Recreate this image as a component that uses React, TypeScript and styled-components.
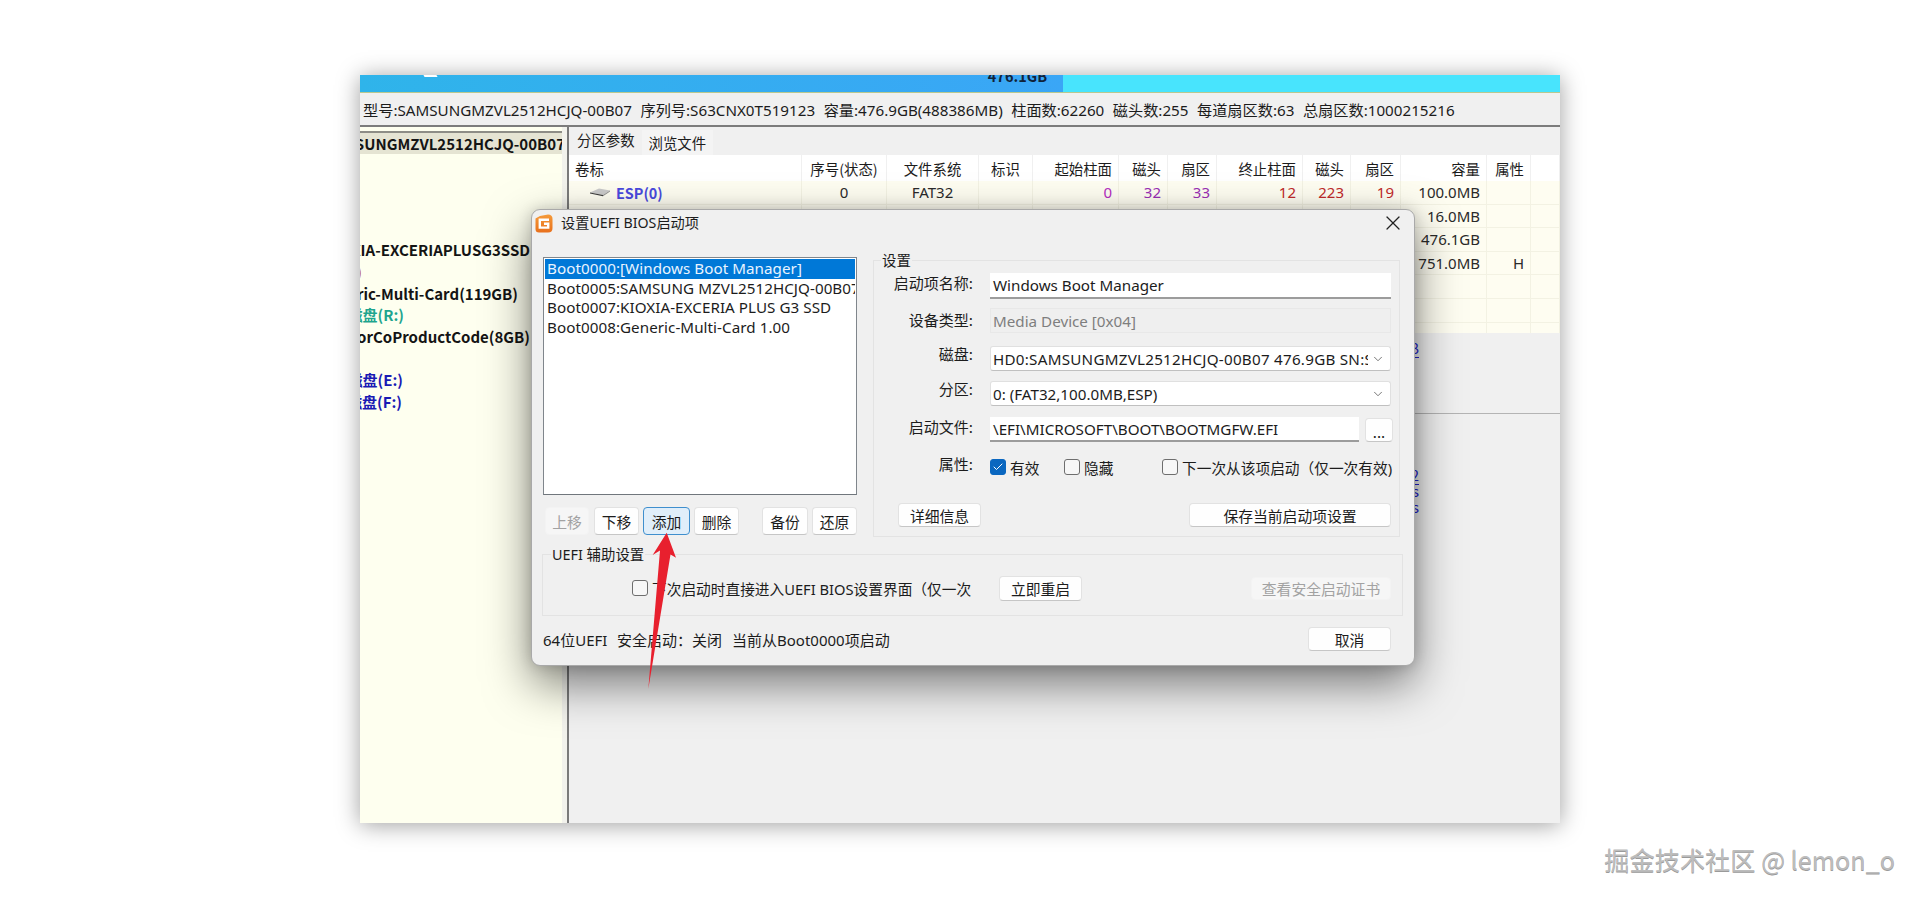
import React from 'react';
import styled, { createGlobalStyle } from 'styled-components';
import { Check, ChevronDown, X } from 'lucide-react';

const UI_FONT = `"Noto Sans", "Noto Sans CJK SC", sans-serif`;
const CJK_FONT = `"Noto Sans CJK SC", "Noto Sans", sans-serif`;

const GlobalStyle = createGlobalStyle`
  html, body {
    margin: 0;
    padding: 0;
    background: #fff;
  }
  * {
    box-sizing: border-box;
  }
`;

const Page = styled.div`
  position: relative;
  width: 1920px;
  height: 898px;
  overflow: hidden;
  padding: 75px 0 0 360px;
  background: #fff;
  font-family: ${CJK_FONT};
  color: #1c1c1c;
`;

const AppWindow = styled.div`
  position: relative;
  width: 1200px;
  height: 748px;
  display: flex;
  flex-direction: column;
  background: #f0f0f0;
  box-shadow: 0 2px 22px rgba(0, 0, 0, 0.38);
`;

const DiskBand = styled.div`
  height: 18px;
  flex: none;
  display: flex;
  border-bottom: 1px solid #b9c88f;
`;

const PartitionBar = styled.div`
  width: 703px;
  position: relative;
  overflow: hidden;
  display: flex;
  justify-content: flex-end;
  align-items: flex-end;
  padding: 0 16px 9px 0;
  background: linear-gradient(to right, #2fb4ea, #3aa6f6);
`;

const BarLabel = styled.span`
  font-size: 14.5px;
  font-weight: 700;
  line-height: 14px;
  color: #10233a;
`;

const BarGlint = styled.span`
  position: absolute;
  left: 64px;
  top: 0;
  width: 13px;
  height: 2px;
  background: #fff;
  transform: skewX(30deg);
`;

const FreeBar = styled.div`
  flex: 1;
  background: #48e4fd;
`;

const InfoBar = styled.div`
  height: 34px;
  flex: none;
  display: flex;
  align-items: center;
  gap: 8.5px;
  padding: 0 0 0 3px;
  border-bottom: 2px solid #7c7c7c;
  font-family: ${UI_FONT};
  font-size: 15.2px;
  white-space: nowrap;
`;

const Split = styled.div`
  flex: 1;
  min-height: 0;
  display: flex;
`;

const TreePane = styled.div`
  width: 202px;
  flex: none;
  overflow: hidden;
  padding-top: 4px;
  background: #feffef;
`;

const TreeRow = styled.div<{ $end: number; $color?: string; $height?: number }>`
  width: ${({ $end }) => $end}px;
  height: ${({ $height }) => $height ?? 21.7}px;
  display: flex;
  align-items: center;
  justify-content: flex-end;
  white-space: nowrap;
  font-size: 15px;
  font-weight: 700;
  color: ${({ $color }) => $color ?? '#141414'};
`;

const TreeSelection = styled.div`
  height: 23px;
  margin-bottom: 85px;
  background: #e5e4d3;
  border-top: 2px solid #8d8d86;
`;

const Splitter = styled.div`
  width: 7px;
  flex: none;
  background: #f2f2ec;
  border-right: 2px solid #7a7a7a;
`;

const DetailPane = styled.div`
  flex: 1;
  min-width: 0;
  display: flex;
  flex-direction: column;
`;

const TabStrip = styled.div`
  height: 28px;
  flex: none;
  display: flex;
  align-items: flex-end;
  padding-left: 1px;
`;

const Tab = styled.div<{ $active?: boolean }>`
  height: ${({ $active }) => ($active ? 26 : 25)}px;
  display: flex;
  align-items: ${({ $active }) => ($active ? 'flex-start' : 'center')};
  padding: 0 7px;
  font-size: 14.4px;
  line-height: 22px;
  background: ${({ $active }) => ($active ? '#f0f0f0' : '#f4f4f4')};
`;

const PartitionGrid = styled.div`
  height: 178px;
  flex: none;
  overflow: hidden;
  display: grid;
  grid-template-columns: 233px 85px 92px 54px 86px 49px 49px 86px 48px 50px 86px 44px 1fr;
  grid-template-rows: 26px;
  grid-auto-rows: 23.6px;
  align-content: start;
  background: #fefdf1;
`;

const HeadCell = styled.div<{ $align: string }>`
  display: flex;
  align-items: center;
  justify-content: ${({ $align }) => $align};
  padding: 0 6px;
  background: #fff;
  border-right: 1px solid #f0f0f0;
  font-size: 14.4px;
  white-space: nowrap;
`;

const Cell = styled.div<{ $align: string; $color?: string }>`
  display: flex;
  align-items: center;
  justify-content: ${({ $align }) => $align};
  padding: 0 6px;
  border-right: 1px solid #f3f2e3;
  border-bottom: 1px solid #f3f2e3;
  font-family: ${UI_FONT};
  font-size: 15px;
  white-space: nowrap;
  color: ${({ $color }) => $color ?? '#2a2a2a'};
`;

const VolumeCell = styled(Cell)`
  padding-left: 21px;
  gap: 6px;
  font-family: ${CJK_FONT};
  font-size: 14.4px;
  font-weight: 700;
`;

const LowerSection = styled.div<{ $height?: number }>`
  flex: ${({ $height }) => ($height ? 'none' : 1)};
  height: ${({ $height }) => ($height ? `${$height}px` : 'auto')};
  padding-top: 7px;
  display: flex;
  flex-direction: column;
  align-items: flex-end;
  width: 850px;
  font-size: 14.4px;
  line-height: 16px;
  color: #2121cf;
`;

const Rule = styled.div`
  height: 1px;
  flex: none;
  background: #b4b4b4;
`;

const DetailLink = styled.span<{ $plain?: boolean; $top?: number }>`
  margin-top: ${({ $top }) => $top ?? 0}px;
  text-decoration: ${({ $plain }) => ($plain ? 'none' : 'underline')};
  text-underline-offset: 3px;
`;

const Dialog = styled.div`
  position: absolute;
  left: 171px;
  top: 134px;
  width: 884px;
  height: 457px;
  display: flex;
  flex-direction: column;
  padding: 0 14px 0 11px;
  background: #f0f0f0;
  border: 1px solid #a9a9a9;
  border-radius: 9px;
  box-shadow: 0 18px 46px rgba(0, 0, 0, 0.5), 0 0 14px rgba(0, 0, 0, 0.16);
  font-family: ${UI_FONT};
  font-size: 15.2px;
`;

const TitleBar = styled.div`
  height: 30px;
  flex: none;
  display: flex;
  align-items: center;
  margin-left: -8px;
  gap: 8px;
  padding-bottom: 4px;
`;

const TitleText = styled.span`
  font-size: 14.2px;
  margin-bottom: 3px;
`;

const CloseButton = styled.div`
  margin-left: auto;
  margin-right: -5px;
  width: 24px;
  height: 24px;
  color: #222;
`;

const MainRow = styled.div`
  height: 297px;
  flex: none;
  padding-top: 17px;
  display: flex;
  gap: 16px;
`;

const ListColumn = styled.div`
  width: 314px;
  flex: none;
  display: flex;
  flex-direction: column;
  gap: 12px;
`;

const ListBox = styled.div`
  height: 238px;
  flex: none;
  overflow: hidden;
  padding: 1px;
  background: #fff;
  border: 1px solid #80868c;
  border-bottom-color: #70767c;
`;

const ListItem = styled.div<{ $selected?: boolean }>`
  height: 19.6px;
  display: flex;
  align-items: center;
  padding: 0 0 1px 2px;
  white-space: nowrap;
  overflow: hidden;
  letter-spacing: 0.05px;
  background: ${({ $selected }) => ($selected ? '#0078d7' : 'transparent')};
  color: ${({ $selected }) => ($selected ? '#e9f4ff' : '#1c1c1c')};
`;

const ListButtons = styled.div`
  display: flex;
  padding-left: 2px;
`;

const PushButton = styled.div<{
  $width: number;
  $height?: number;
  $mode?: 'focus' | 'disabled';
  $left?: number | 'auto';
  $mr?: number;
}>`
  width: ${({ $width }) => $width}px;
  height: ${({ $height }) => $height ?? 28}px;
  flex: none;
  display: flex;
  align-items: center;
  justify-content: center;
  margin-left: ${({ $left }) => ($left === 'auto' ? 'auto' : `${$left ?? 0}px`)};
  margin-right: ${({ $mr }) => $mr ?? 0}px;
  border-radius: 4px;
  white-space: nowrap;
  font-family: ${CJK_FONT};
  font-size: 14.8px;
  background: ${({ $mode }) =>
    $mode === 'focus' ? '#e0eefa' : $mode === 'disabled' ? '#f6f6f6' : '#fefefe'};
  color: ${({ $mode }) => ($mode === 'disabled' ? '#a2a2a2' : '#1c1c1c')};
  border: ${({ $mode }) =>
    $mode === 'focus'
      ? '1.5px solid #3f8fce'
      : $mode === 'disabled'
        ? '1px solid #f3f3f3'
        : '1px solid #e2e2e2'};
  border-bottom-color: ${({ $mode }) =>
    $mode === 'focus' ? '#3f8fce' : $mode === 'disabled' ? '#f3f3f3' : '#c6c6c6'};
`;

const GroupBox = styled.div`
  position: relative;
  border: 1px solid #e3e3e3;
`;

const GroupLegend = styled.span<{ $left: number }>`
  position: absolute;
  left: ${({ $left }) => $left}px;
  top: -10px;
  padding: 0 1px;
  font-size: 14.4px;
  line-height: 20px;
  background: #f0f0f0;
  white-space: nowrap;
`;

const SettingsBox = styled(GroupBox)`
  width: 527px;
  height: 277px;
  margin-top: 3px;
  padding: 12px 8px 0 0;
  display: flex;
  flex-direction: column;
`;

const FormRow = styled.div<{ $top?: number; $height: number }>`
  height: ${({ $height }) => $height}px;
  margin-top: ${({ $top }) => $top ?? 0}px;
  flex: none;
  display: flex;
  align-items: center;
`;

const FieldLabel = styled.div<{ $lift: number }>`
  width: 99px;
  flex: none;
  margin-right: 17px;
  padding-bottom: ${({ $lift }) => $lift}px;
  text-align: right;
  font-family: ${CJK_FONT};
  font-size: 15px;
  white-space: nowrap;
`;

const TextField = styled.div<{ $readOnly?: boolean; $select?: boolean }>`
  flex: 1;
  min-width: 0;
  height: 100%;
  display: flex;
  align-items: center;
  padding: 0 3px 0 ${({ $readOnly, $select }) => ($readOnly || $select ? 2 : 3)}px;
  white-space: nowrap;
  overflow: hidden;
  background: ${({ $readOnly }) => ($readOnly ? '#efefef' : '#fff')};
  color: ${({ $readOnly }) => ($readOnly ? '#7e7e7e' : '#1c1c1c')};
  border: ${({ $readOnly, $select }) =>
    $readOnly ? '1px solid #e8e8e8' : $select ? '1px solid #e0e0e0' : 'none'};
  border-bottom: ${({ $readOnly, $select }) =>
    $readOnly ? '1px solid #e8e8e8' : $select ? '1px solid #c0c0c0' : '2px solid #9c9c9c'};
  border-radius: ${({ $select }) => ($select ? 3 : 0)}px;
`;

const SelectText = styled.span<{ $spacing?: number }>`
  flex: 1;
  min-width: 0;
  overflow: hidden;
  letter-spacing: ${({ $spacing }) => $spacing ?? 0}px;
`;

const SelectChevron = styled.span`
  width: 19px;
  flex: none;
  display: flex;
  justify-content: center;
  color: #5a5a5a;
`;

const BrowseButton = styled(PushButton)`
  margin-left: 6px;
  margin-right: -2px;
  padding-top: 3px;
`;

const CheckItem = styled.div<{ $width?: number }>`
  width: ${({ $width }) => ($width ? `${$width}px` : 'auto')};
  flex: none;
  display: flex;
  align-items: center;
  gap: 4px;
  white-space: nowrap;
  font-size: 14.7px;
`;

const CheckMark = styled.span<{ $on?: boolean }>`
  width: 16px;
  height: 16px;
  flex: none;
  display: flex;
  align-items: center;
  justify-content: center;
  border-radius: 3px;
  color: #fff;
  background: ${({ $on }) => ($on ? '#0a67c0' : '#f7f7f7')};
  border: 1px solid ${({ $on }) => ($on ? '#0a67c0' : '#6e6e6e')};
`;

const AuxBox = styled(GroupBox)`
  width: 861px;
  height: 62px;
  margin: 17px 0 0 -1px;
  flex: none;
  display: flex;
  align-items: center;
  padding: 6px 11px 0 89px;
`;

const StatusBar = styled.div`
  flex: 1;
  display: flex;
  align-items: center;
  padding-right: 9px;
  padding-bottom: 3px;
  font-size: 15px;
  white-space: nowrap;
`;

const StatusText = styled.span<{ $width: number }>`
  width: ${({ $width }) => $width}px;
  flex: none;
`;

const ArrowOverlay = styled.svg`
  position: absolute;
  left: 640px;
  top: 530px;
  width: 40px;
  height: 162px;
`;

const Watermark = styled.div`
  position: absolute;
  right: 25px;
  top: 842px;
  font-size: 25.2px;
  line-height: 34px;
  white-space: nowrap;
  color: #bdbdbd;
  text-shadow: 0 1px 0 #9a9a9a;
`;

const columns = [
  { title: '卷标', align: 'flex-start' },
  { title: '序号(状态)', align: 'center' },
  { title: '文件系统', align: 'center' },
  { title: '标识', align: 'center' },
  { title: '起始柱面', align: 'flex-end' },
  { title: '磁头', align: 'flex-end' },
  { title: '扇区', align: 'flex-end' },
  { title: '终止柱面', align: 'flex-end' },
  { title: '磁头', align: 'flex-end' },
  { title: '扇区', align: 'flex-end' },
  { title: '容量', align: 'flex-end' },
  { title: '属性', align: 'flex-end' },
  { title: '', align: 'flex-start' },
];

const MAGENTA = '#b42cc0';
const PURPLE = '#9a2fb4';
const RED = '#c02a2a';
const cellColors = [undefined, undefined, undefined, undefined, MAGENTA, PURPLE, PURPLE, RED, RED, RED];

const partitions = [
  ['ESP(0)', '0', 'FAT32', '', '0', '32', '33', '12', '223', '19', '100.0MB', '', ''],
  ['MSR(1)', '1', 'MSR', '', '12', '223', '20', '14', '138', '58', '16.0MB', '', ''],
  ['本地磁盘(C:)', '2', 'NTFS', '', '14', '138', '59', '62162', '47', '18', '476.1GB', '', ''],
  ['恢复(3)', '3', 'NTFS', '', '62162', '47', '19', '62260', '0', '0', '751.0MB', 'H', ''],
  ['', '', '', '', '', '', '', '', '', '', '', '', ''],
  ['', '', '', '', '', '', '', '', '', '', '', '', ''],
  ['', '', '', '', '', '', '', '', '', '', '', '', ''],
];

const bootEntries = [
  'Boot0000:[Windows Boot Manager]',
  'Boot0005:SAMSUNG MZVL2512HCJQ-00B07',
  'Boot0007:KIOXIA-EXCERIA PLUS G3 SSD',
  'Boot0008:Generic-Multi-Card 1.00',
];

function DriveIcon() {
  return (
    <svg width="20" height="10" viewBox="0 0 20 10" style={{ flex: 'none' }}>
      <path d="M0 5.5 L9 1.5 L20 3.5 L13 8 Z" fill="#c9c9c9" />
      <path d="M0 5.5 L13 8 L13 9.2 L0 6.6 Z" fill="#3c3c3c" />
      <path d="M13 8 L20 3.5 L20 4.6 L13 9.2 Z" fill="#8e8e8e" />
    </svg>
  );
}

function AppLogo() {
  return (
    <svg width="18" height="19" viewBox="0 0 18 19" style={{ flex: 'none' }}>
      <defs>
        <linearGradient id="logoFill" x1="0" y1="0" x2="0" y2="1">
          <stop offset="0" stopColor="#f59a3a" />
          <stop offset="1" stopColor="#e8701c" />
        </linearGradient>
      </defs>
      <path d="M5 2 L13 0.5 Q17.5 0.5 17.5 5 L17.5 14 Q17.5 18.5 13 18.5 L4 18.5 Q0.5 18.5 0.5 15 L0.5 4.5 Z" fill="url(#logoFill)" />
      <path d="M14 5.8 L4.8 5.8 L4.8 13.6 L13.2 13.6 L13.2 9.8 L9 9.8" fill="none" stroke="#fff" strokeWidth="2.4" />
    </svg>
  );
}

export default function App() {
  return (
    <Page>
      <GlobalStyle />
      <AppWindow>
        <DiskBand>
          <PartitionBar>
            <BarGlint />
            <BarLabel>476.1GB</BarLabel>
          </PartitionBar>
          <FreeBar />
        </DiskBand>
        <InfoBar>
          <span>型号:SAMSUNGMZVL2512HCJQ-00B07</span>
          <span>序列号:S63CNX0T519123</span>
          <span>容量:476.9GB(488386MB)</span>
          <span>柱面数:62260</span>
          <span>磁头数:255</span>
          <span>每道扇区数:63</span>
          <span>总扇区数:1000215216</span>
        </InfoBar>
        <Split>
          <TreePane>
            <TreeSelection>
              <TreeRow $end={205} $height={21}>SAMSUNGMZVL2512HCJQ-00B07</TreeRow>
            </TreeSelection>
            <TreeRow $end={170}>KIOXIA-EXCERIAPLUSG3SSD</TreeRow>
            <TreeRow $end={2} $color="#c0502a">本地磁盘(D:)</TreeRow>
            <TreeRow $end={158}>Generic-Multi-Card(119GB)</TreeRow>
            <TreeRow $end={44} $color="#1fa58e">本地磁盘(R:)</TreeRow>
            <TreeRow $end={170}>VendorCoProductCode(8GB)</TreeRow>
            <TreeRow $end={0} />
            <TreeRow $end={43} $color="#1a1ab4">本地磁盘(E:)</TreeRow>
            <TreeRow $end={42} $color="#1a1ab4">本地磁盘(F:)</TreeRow>
          </TreePane>
          <Splitter />
          <DetailPane>
            <TabStrip>
              <Tab $active>分区参数</Tab>
              <Tab>浏览文件</Tab>
            </TabStrip>
            <PartitionGrid>
              {columns.map((col, i) => (
                <HeadCell key={i} $align={col.align}>{col.title}</HeadCell>
              ))}
              {partitions.map((row, r) =>
                row.map((value, c) =>
                  c === 0 ? (
                    <VolumeCell key={`${r}-${c}`} $align="flex-start" $color="#4a4ade">
                      {value && <DriveIcon />}
                      {value}
                    </VolumeCell>
                  ) : (
                    <Cell key={`${r}-${c}`} $align={columns[c].align} $color={cellColors[c]}>
                      {value}
                    </Cell>
                  ),
                ),
              )}
            </PartitionGrid>
            <LowerSection $height={80}>
              <DetailLink>8GB</DetailLink>
            </LowerSection>
            <Rule />
            <LowerSection>
              <DetailLink $top={46}>512</DetailLink>
              <DetailLink $plain>Bytes</DetailLink>
              <DetailLink $plain>Bytes</DetailLink>
            </LowerSection>
          </DetailPane>
        </Split>

        <Dialog>
          <TitleBar>
            <AppLogo />
            <TitleText>设置UEFI BIOS启动项</TitleText>
            <CloseButton>
              <X size={24} strokeWidth={1.2} />
            </CloseButton>
          </TitleBar>
          <MainRow>
            <ListColumn>
              <ListBox>
                {bootEntries.map((entry, i) => (
                  <ListItem key={entry} $selected={i === 0}>{entry}</ListItem>
                ))}
              </ListBox>
              <ListButtons>
                <PushButton $width={44} $mode="disabled" $mr={5}>上移</PushButton>
                <PushButton $width={45} $mr={4}>下移</PushButton>
                <PushButton $width={47} $mode="focus" $mr={4}>添加</PushButton>
                <PushButton $width={45} $mr={23}>删除</PushButton>
                <PushButton $width={46} $mr={4}>备份</PushButton>
                <PushButton $width={45}>还原</PushButton>
              </ListButtons>
            </ListColumn>
            <SettingsBox>
              <GroupLegend $left={7}>设置</GroupLegend>
              <FormRow $height={26}>
                <FieldLabel $lift={8}>启动项名称:</FieldLabel>
                <TextField>Windows Boot Manager</TextField>
              </FormRow>
              <FormRow $top={9} $height={25}>
                <FieldLabel $lift={3}>设备类型:</FieldLabel>
                <TextField $readOnly>Media Device [0x04]</TextField>
              </FormRow>
              <FormRow $top={13} $height={25}>
                <FieldLabel $lift={10}>磁盘:</FieldLabel>
                <TextField $select>
                  <SelectText $spacing={0.25}>HD0:SAMSUNGMZVL2512HCJQ-00B07 476.9GB SN:S63CNX0T519123</SelectText>
                  <SelectChevron><ChevronDown size={14} strokeWidth={1.4} /></SelectChevron>
                </TextField>
              </FormRow>
              <FormRow $top={10} $height={25}>
                <FieldLabel $lift={10}>分区:</FieldLabel>
                <TextField $select>
                  <SelectText>0: (FAT32,100.0MB,ESP)</SelectText>
                  <SelectChevron><ChevronDown size={14} strokeWidth={1.4} /></SelectChevron>
                </TextField>
              </FormRow>
              <FormRow $top={11} $height={25}>
                <FieldLabel $lift={7}>启动文件:</FieldLabel>
                <TextField>\EFI\MICROSOFT\BOOT\BOOTMGFW.EFI</TextField>
                <BrowseButton $width={28} $height={24}>...</BrowseButton>
              </FormRow>
              <FormRow $top={17} $height={16}>
                <FieldLabel $lift={8}>属性:</FieldLabel>
                <CheckItem $width={74}>
                  <CheckMark $on><Check size={12} strokeWidth={2} /></CheckMark>
                  有效
                </CheckItem>
                <CheckItem $width={98}>
                  <CheckMark />
                  隐藏
                </CheckItem>
                <CheckItem>
                  <CheckMark />
                  下一次从该项启动（仅一次有效)
                </CheckItem>
              </FormRow>
              <FormRow $top={28} $height={24}>
                <PushButton $width={83} $height={24} $left={24}>详细信息</PushButton>
                <PushButton $width={202} $height={24} $left="auto">保存当前启动项设置</PushButton>
              </FormRow>
            </SettingsBox>
          </MainRow>
          <AuxBox>
            <GroupLegend $left={8}>UEFI 辅助设置</GroupLegend>
            <CheckItem $width={367}>
              <CheckMark />
              下次启动时直接进入UEFI BIOS设置界面（仅一次
            </CheckItem>
            <PushButton $width={83} $height={25}>立即重启</PushButton>
            <PushButton $width={140} $height={23} $mode="disabled" $left="auto">查看安全启动证书</PushButton>
          </AuxBox>
          <StatusBar>
            <StatusText $width={74}>64位UEFI</StatusText>
            <StatusText $width={115}>安全启动：关闭</StatusText>
            <span>当前从Boot0000项启动</span>
            <PushButton $width={83} $height={24} $left="auto">取消</PushButton>
          </StatusBar>
        </Dialog>
      </AppWindow>

      <ArrowOverlay viewBox="0 0 40 162">
        <path d="M26.7 2.7 L36 27.7 L30.5 24.5 L8.3 159 L20 20.5 L12.7 25 Z" fill="#e8202e" />
      </ArrowOverlay>
      <Watermark>掘金技术社区 @ lemon_o</Watermark>
    </Page>
  );
}
